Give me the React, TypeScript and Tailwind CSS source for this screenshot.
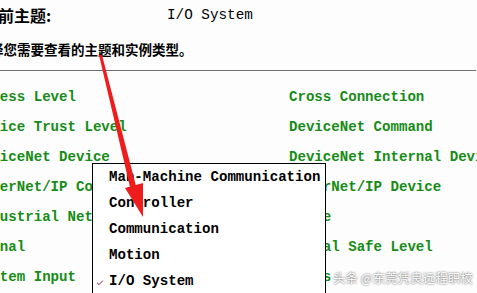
import { Check } from "lucide-react"

const leftItems = [
    "Access Level",
    "Device Trust Level",
    "DeviceNet Device",
    "EtherNet/IP Connection",
    "Industrial Network",
    "Signal",
    "System Input",
]

const rightItems = [
    "Cross Connection",
    "DeviceNet Command",
    "DeviceNet Internal Device",
    "EtherNet/IP Device",
    "Value",
    "Normal Safe Level",
    "Types",
]

const menuItems = [
    "Man-Machine Communication",
    "Controller",
    "Communication",
    "Motion",
    "I/O System",
]

function App() {
    const mono = "font-['Liberation_Mono','DejaVu_Sans_Mono',monospace]"
    const cjk = "font-['Noto_Sans_CJK_SC','Noto_Sans',sans-serif]"

    return (
        <div className="relative w-[477px] h-[293px] overflow-hidden bg-[#fdfdfd] text-black">
            {/* header */}
            <div className="flex items-center h-[30px] whitespace-nowrap">
                <div className={`${cjk} ml-[-18px] w-[185px] text-[16px] font-bold leading-none`}>当前主题:</div>
                <div className={`${mono} text-[14.3px] leading-none`}>I/O System</div>
            </div>
            <div className={`${cjk} mt-[10px] ml-[-37px] h-[20px] flex items-center whitespace-nowrap text-[13.5px] font-bold leading-none`}>
                请选择您需要查看的主题和实例类型。
            </div>
            <div className="mt-[10px] w-[476px] border-t border-[#6e6e6e]"></div>

            {/* topic list */}
            <div className={`${mono} mt-[12px] ml-[-25.5px] grid grid-cols-[314.5px_1fr] text-[14.1px] font-bold text-[#168c16] whitespace-nowrap`}>
                {leftItems.map((l, i) => (
                    <div key={i} className="contents">
                        <div className="h-[30px] flex items-center">{l}</div>
                        <div className="h-[30px] flex items-center">{rightItems[i]}</div>
                    </div>
                ))}
            </div>

            {/* popup menu */}
            <div className="absolute left-[92px] top-[163px] w-[234px] h-[150px] border border-black bg-white">
                <div className={`${mono} pt-[1px] text-[14.1px] font-bold whitespace-nowrap`}>
                    {menuItems.map((m) => (
                        <div key={m} className="relative h-[26px] flex items-center pl-[16px]">
                            {m === "I/O System" && (
                                <Check className="absolute left-[3px] top-[10px] w-[8px] h-[8px] text-[#7a2436]" strokeWidth={3} />
                            )}
                            {m}
                        </div>
                    ))}
                </div>
            </div>

            {/* red arrow */}
            <svg className="absolute left-0 top-0" width="477" height="293" viewBox="0 0 477 293">
                <polygon points="99,55 102,55 136,186 130,187" fill="#ee1c1c" />
                <polygon points="125,188 143,217 143,183" fill="#ee1c1c" />
            </svg>

            {/* watermark */}
            <div className={`${cjk} absolute left-[333px] top-[269px] text-[12.5px] text-white whitespace-nowrap [text-shadow:0_0_2px_rgba(0,0,0,0.8)]`}>
                头条 @东莞凭良远程职校
            </div>
        </div>
    )
}

export default App
